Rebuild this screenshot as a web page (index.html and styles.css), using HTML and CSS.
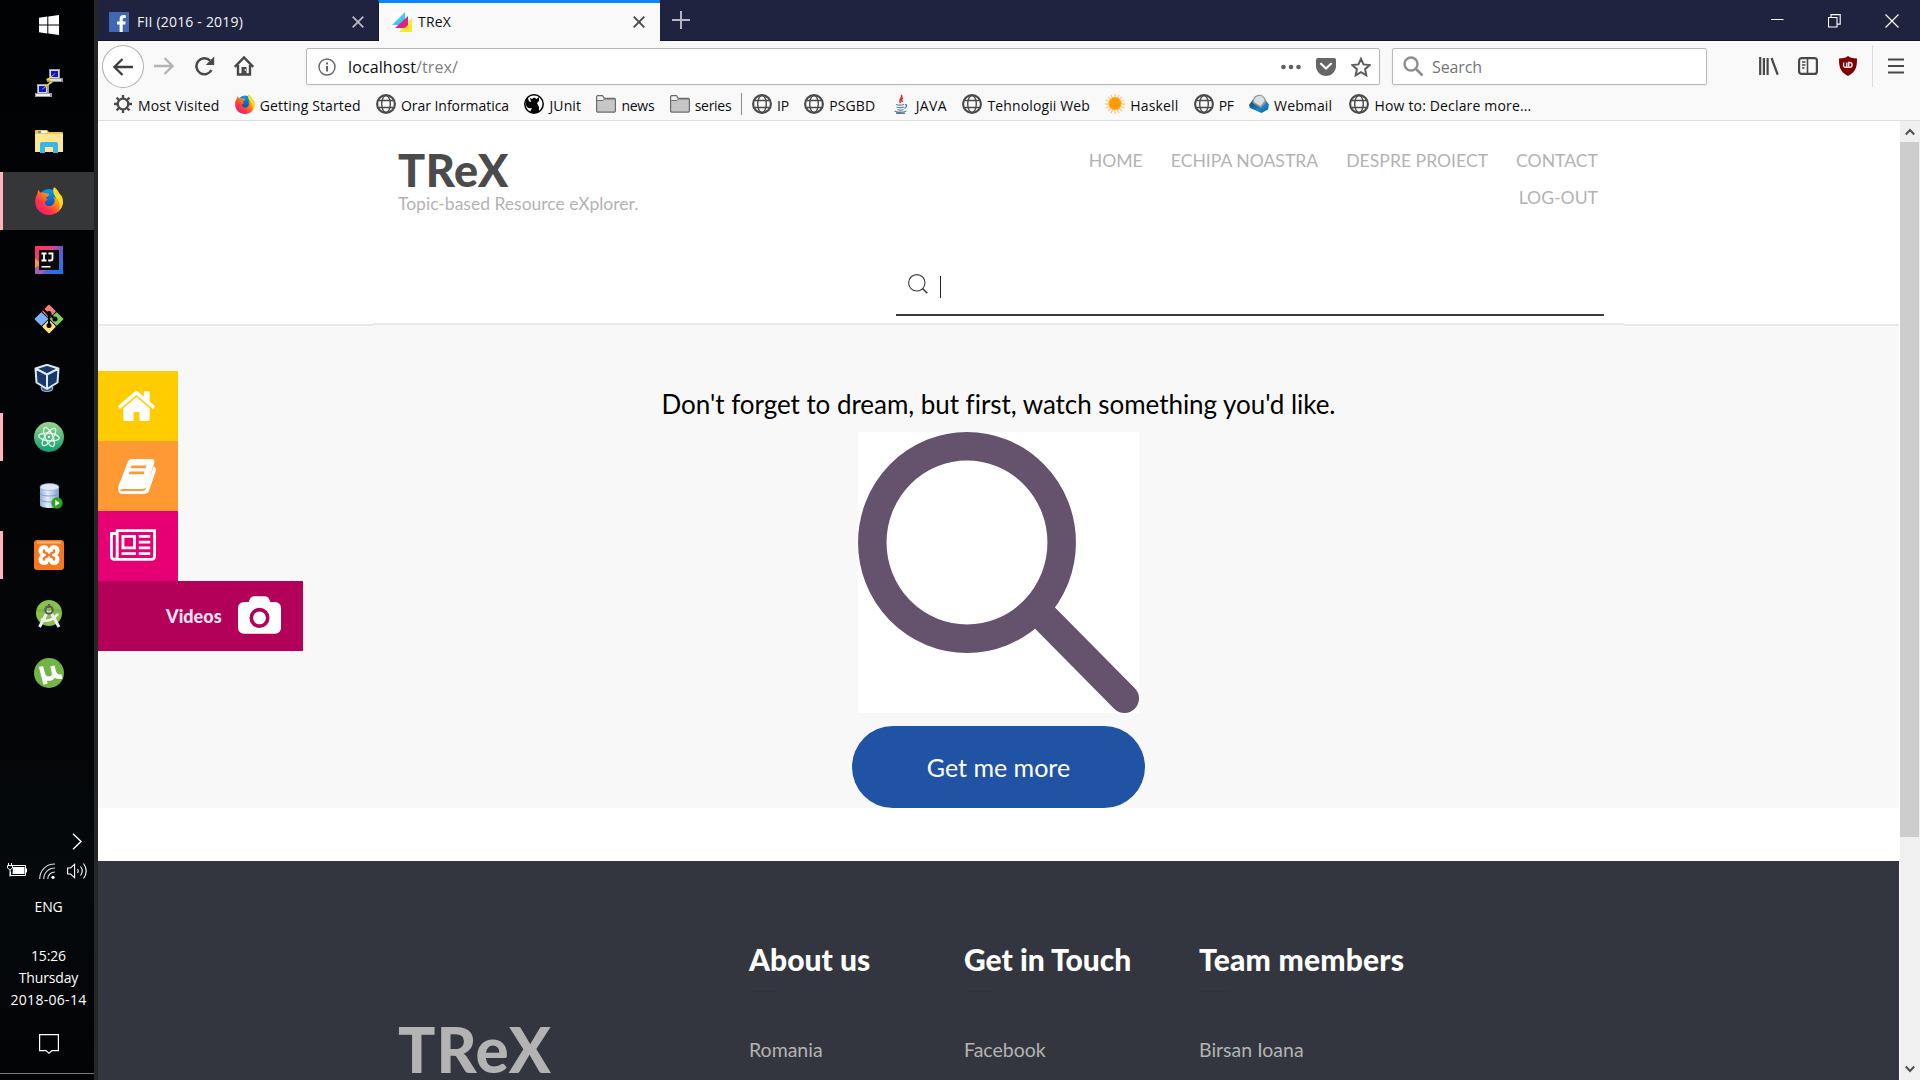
FILE: index.html
```html
<!DOCTYPE html>
<html lang="en">
<head>
<meta charset="utf-8">
<title>TReX</title>
<link rel="stylesheet" href="styles.css">
</head>
<body>
<svg class="defs" aria-hidden="true">
  <defs>
    <linearGradient id="fx-body" x1="1" y1="0" x2="0.1" y2="1"><stop offset="0" stop-color="#ffe226"/><stop offset="0.4" stop-color="#ff9a0a"/><stop offset="0.7" stop-color="#ff3647"/><stop offset="1" stop-color="#e31587"/></linearGradient>
    <linearGradient id="fx-globe" x1="0" y1="0" x2="0" y2="1"><stop offset="0" stop-color="#00a2f0"/><stop offset="1" stop-color="#133c9b"/></linearGradient>
    <linearGradient id="atom-bg" x1="0" y1="0" x2="0" y2="1"><stop offset="0" stop-color="#9bd58b"/><stop offset="1" stop-color="#0d9f70"/></linearGradient>
    <linearGradient id="ij-bg" x1="0" y1="0" x2="1" y2="1"><stop offset="0" stop-color="#ff2e63"/><stop offset="0.35" stop-color="#e8407a"/><stop offset="0.5" stop-color="#6a5ac8"/><stop offset="1" stop-color="#087cfa"/></linearGradient>
    <linearGradient id="db-bg" x1="0" x2="1"><stop offset="0" stop-color="#8fb2de"/><stop offset="0.4" stop-color="#e2ecf9"/><stop offset="1" stop-color="#7f9cc8"/></linearGradient>
    <linearGradient id="mail-bg" x1="0" y1="0" x2="1" y2="1"><stop offset="0" stop-color="#14405f"/><stop offset="0.6" stop-color="#1c83c6"/><stop offset="1" stop-color="#0e5f9e"/></linearGradient>
    <symbol id="firefox" viewBox="0 0 28 28">
      <circle cx="14" cy="12.5" r="10.5" fill="url(#fx-globe)"/>
      <path d="M19 .2c3 2 4.500 4.500 5.200 6.300 2.200 1.700 4 5 3.700 9C27.300 22.500 21.500 28 14 28S.3 22.500.2 15c0-4 .8-6 2.200-8.200C2.400 5 3 3.600 4 3c.3 1.400 1 2.300 1.600 2.800 2-.6 4 0 5 .3 1 .5 2 .9 3.600.6-.1 1.500-1 2.600-3 3.300-.5 1.500.5 2.200 1.800 2.800-2 .6-3 1.500-3.300 3 .8 2.700 3.300 3.700 5.500 3.200 3.300-.8 5-3.500 4.200-6.700-.3-1-.8-1.700-1.400-2.300 1.500.3 2.300 1 3 2C20.800 8.500 17 5 19 .2z" fill="url(#fx-body)"/>
      <path d="M19 .2c3 2 4.500 4.500 5.200 6.300 2.200 1.700 4 5 3.700 9-.2 3-1.500 6-3.500 8 1-5 .6-8.500-3-12.500C18.500 7.500 17.500 4 19 .2z" fill="#ffe22e" opacity="0.85"/>
    </symbol>
    <symbol id="globe" viewBox="0 0 20 20">
      <g fill="none" stroke="#4a4a4a"><circle cx="10" cy="10" r="8.900" stroke-width="2.100"/><ellipse cx="10" cy="10" rx="4.300" ry="8.500" stroke-width="1.400"/><path d="M2.500 6.500h15M2.500 13.500h15" stroke-width="1.400"/></g>
    </symbol>
    <symbol id="folder" viewBox="0 0 20 18">
      <path d="M.6 16.200V1.600L1.500.7h5l1.800 2.600h10.200l.9.900v12l-.9.900h-17z" fill="#c6c6c6" stroke="#6b6b6b" stroke-width="1.200"/><path d="M1.300 5.500h5.500L8.500 4h10.300" fill="none" stroke="#6b6b6b"/><path d="M1.500 1.500h4.700L7.800 4 6.400 5H1.500z" fill="#f1f1f1"/>
    </symbol>
  </defs>
</svg>

<div class="screen">
  <aside class="taskbar">
    <div class="apps">
      <div class="app start"><svg width="20" height="20" viewBox="0 0 20 20"><path d="M0 2.800 8.300 1.500v8H0zM9.300 1.400 20 0v9.500H9.300zM0 10.500h8.300v8L0 17.200zM9.300 10.500H20V20L9.300 18.600z" fill="#fff"/></svg></div>
      <div class="app"><svg width="28" height="28" viewBox="0 0 28 28"><path d="M14 0h11v9h3v4H12v-4h2z" fill="#9a9a9a"/><path d="M15 1h9v8h-9z" fill="#d8d8d8"/><path d="M16 2h7v6h-7z" fill="#1010e0"/><path d="M13 10h13v2H13z" fill="#ddd"/><path d="M2 15h12v9h3v4H0v-4h2z" fill="#9a9a9a"/><path d="M3 16h9v8H3z" fill="#d8d8d8"/><path d="M4 17h7v6H4z" fill="#1010e0"/><path d="M1 25h14v2H1z" fill="#eee"/><path d="M20 4.500 11 11l5 1-9 8.500L18 13l-5-1.500z" fill="#ffff10" stroke="#a8a000" stroke-width="0.500"/></svg></div>
      <div class="app"><svg width="28" height="24" viewBox="0 0 28 24"><path d="M0 1q0-1 1-1h11l2 2h13q1 0 1 1v19H0z" fill="#f6c445"/><path d="M0 4h28v18H0z" fill="#ffe695"/><path d="M3 1h9v2H3z" fill="#fff"/><path d="M3 1h3v2H3z" fill="#25a8dc"/><path d="M5 23v-9q0-2 2-2h14q2 0 2 2v9h-5v-6H10v6z" fill="#3cb4e7"/></svg></div>
      <div class="app active"><svg width="28" height="28"><use href="#firefox"/></svg></div>
      <div class="app"><svg width="28" height="28" viewBox="0 0 28 28"><path d="M0 0h28v28H0z" fill="url(#ij-bg)"/><path d="M0 12l6 6-6 5z" fill="#fc9a22"/><path d="M0 28v-6l6-4 4 7-3 3z" fill="#a05fb0"/><path d="M4 4h20v20H4z" fill="#0a0a0a"/><path d="M6.500 7.500h5M6.500 14.500h5M9 7.500v7M13.500 7.500h4v5q0 2-2 2h-2.300" fill="none" stroke="#fff" stroke-width="1.800"/><path d="M6.500 20h9v1.500h-9z" fill="#fff"/></svg></div>
      <div class="app"><svg width="30" height="30" viewBox="0 0 30 30"><g transform="rotate(45 15 15)"><rect x="4.600" y="4.600" width="10" height="10" rx="1" fill="#f87c7c"/><rect x="15.400" y="4.600" width="10" height="10" rx="1" fill="#84cc5e"/><rect x="4.600" y="15.400" width="10" height="10" rx="1" fill="#7db0ff"/><rect x="15.400" y="15.400" width="10" height="10" rx="1" fill="#ffe07a"/></g><path d="M9.500 5.500 15 11v10M15 10l6 5" stroke="#000" stroke-width="2" fill="none"/><circle cx="15" cy="9.500" r="2.500"/><circle cx="21" cy="15" r="2.500"/><circle cx="15" cy="21.500" r="2.500"/></svg></div>
      <div class="app vbox"><svg width="26" height="28" viewBox="0 0 26 28"><path d="M7 23h12l-1 3.500q-5 2.500-10 0z" fill="#3a568c" stroke="#9eb4d8"/><path d="M13 .8 24.500 4.500 23.500 18.500 13 25 2.500 18.500 1.500 4.500z" fill="#183a68"/><path d="M13 .8 24.500 4.500 13 10.500 1.500 4.500zM13 10.500V25L2.500 18.500l-1-14M24.500 4.500l-1 14L13 25" fill="none" stroke="#dfe8f5" stroke-width="2" stroke-linejoin="round"/></svg></div>
      <div class="app open"><svg width="30" height="30" viewBox="0 0 30 30"><circle cx="15" cy="15" r="15" fill="url(#atom-bg)"/><g fill="none" stroke="#e8fff0" stroke-width="1.200"><ellipse cx="15" cy="15" rx="10.300" ry="3.800" transform="rotate(6 15 15)"/><ellipse cx="15" cy="15" rx="10.300" ry="3.800" transform="rotate(66 15 15)"/><ellipse cx="15" cy="15" rx="10.300" ry="3.800" transform="rotate(126 15 15)"/></g><circle cx="15" cy="15" r="1.200" fill="#fff"/></svg></div>
      <div class="app database"><svg width="24" height="26" viewBox="0 0 24 26"><path d="M1 4v18c0 4 19 4 19 0V4z" fill="url(#db-bg)"/><ellipse cx="10.500" cy="4" rx="9.500" ry="3.500" fill="#dce8f7" stroke="#8fa9cf" stroke-width="0.600"/><path d="M1 10c0 4 19 4 19 0M1 16c0 4 19 4 19 0" fill="none" stroke="#7e99c6" stroke-width="0.900"/><circle cx="18" cy="20" r="5.700" fill="#2ba51d"/><path d="M16.300 17v6l4.500-3z" fill="#fff"/></svg></div>
      <div class="app open"><svg width="30" height="30" viewBox="0 0 30 30"><rect width="30" height="30" rx="3" fill="#f5781f"/><path d="M3 1.500h24v2H3z" fill="#ffb77f"/><g fill="#fff"><circle cx="10" cy="10.500" r="5.500"/><circle cx="20" cy="10.500" r="5.500"/><circle cx="10" cy="19.500" r="5.500"/><circle cx="20" cy="19.500" r="5.500"/><path d="M7 10h16v10H7z"/></g><path d="M10 9.500v2.500l3 1.500v3L10 18v2.500M20 9.500v2.500l-3 1.500v3l3 1.500v2.500M12 15h6" fill="none" stroke="#f5781f" stroke-width="2.300"/><path d="M13.500 4h3L15 9zM13.500 26h3L15 21z" fill="#f5781f"/></svg></div>
      <div class="app"><svg width="26" height="30" viewBox="0 0 26 30"><circle cx="13" cy="14" r="13" fill="#8ac249"/><path d="M1 10h24v3H1z" fill="#74a83d" opacity="0.500"/><path d="M5 20q8 5 17-5" fill="none" stroke="#fff" stroke-width="2.500"/><path d="M12 12 3.500 28M14 12l9 16" stroke="#eceff1" stroke-width="3"/><circle cx="13" cy="11" r="3.700" fill="none" stroke="#55625a" stroke-width="2.200"/><path d="M12 5h2v4h-2z" fill="#55625a"/></svg></div>
      <div class="app"><svg width="30" height="30" viewBox="0 0 30 30"><circle cx="15" cy="15" r="15" fill="#72b446"/><path d="M7 8.500 11.500 26M8.800 16q1.800 5.500 7 4.500t4-6.500L18.500 8M20 14q1.800 6 8 4.500" fill="none" stroke="#fff" stroke-width="4.400"/></svg></div>
    </div>
    <div class="tray">
      <svg class="chevron" width="10" height="17" viewBox="0 0 10 17"><path d="M1 .7 9 8.500 1 16.300" fill="none" stroke="#fff" stroke-width="1.400"/></svg>
      <div class="status">
        <svg width="20" height="16" viewBox="0 0 20 16"><path d="M5 2.500h13.500v10H3.500v-4" fill="none" stroke="#fff"/><path d="M6 4h11.500v7H5.500zM19 5.500h1v4h-1z" fill="#fff"/><path d="M1.500 0v2.500M4.500 0v2.500M.5 2.500h5V5l-2 1.500h-1L.5 5zM3 6.500v7" fill="none" stroke="#fff"/></svg>
        <svg width="17" height="17" viewBox="0 0 17 17"><g fill="none" stroke="#ddd" stroke-width="1.100"><path d="M.7 16C.7 7.500 7 1 16 1"/><path d="M4.800 16C4.800 9.500 9.500 5 16 5"/><path d="M8.800 16c0-4 3-7 7.200-7"/></g><circle cx="14" cy="14.300" r="1.600" fill="#fff"/></svg>
        <svg width="21" height="18" viewBox="0 0 21 18"><g fill="none" stroke="#fff" stroke-width="1.100"><path d="M.6 6v6h3l4 3.800V2.200L3.600 6z"/><path d="M10.500 7q1.500 2 0 4M13.500 4.500q3.500 4.500 0 9M16.500 1.500q5.500 7.500 0 15"/></g></svg>
      </div>
      <div class="lang">ENG</div>
      <div class="clock"><span>15:26</span><span>Thursday</span><span class="date">2018-06-14</span></div>
      <svg class="bubble" width="20" height="20" viewBox="0 0 20 20"><path d="M.6.600h18.800v16h-6.400L10 19.200 7 16.600H.6z" fill="none" stroke="#fff" stroke-width="1.200"/></svg>
    </div>
  </aside>

  <div class="browser">
    <div class="tabs">
      <div class="tab">
        <svg width="20" height="20" viewBox="0 0 20 20"><rect width="20" height="20" rx="0.800" fill="#4267b2"/><path d="M13.700 20v-7.600h2.600l.4-3h-3v-2c0-.9.300-1.500 1.500-1.500h1.600V3.200c-.3 0-1.200-.1-2.300-.1-2.400 0-3.900 1.400-3.900 4v2.300H8v3h2.600V20z" fill="#fff"/></svg>
        <span class="label">FII (2016 - 2019)</span>
        <svg class="close" width="12" height="12" viewBox="0 0 12 12"><path d="m.7.700 10.600 10.600M11.300.7.700 11.300" stroke="#b9bac4" stroke-width="1.800"/></svg>
      </div>
      <div class="tab current">
        <svg width="20" height="20" viewBox="0 0 20 20"><path d="M0 0h20v20H0z" fill="#fff"/><path d="M0 13 13 0v8l-5 5z" fill="#40c8f4"/><path d="M7 20 20 6v14z" fill="#ffe52e"/><path d="M3 16 16 4v9l-3 3z" fill="#e0257f"/></svg>
        <span class="label">TReX</span>
        <svg class="close" width="12" height="12" viewBox="0 0 12 12"><path d="m.7.700 10.600 10.600M11.300.7.700 11.300" stroke="#4a4a4f" stroke-width="1.900"/></svg>
      </div>
      <svg class="plus" width="18" height="18" viewBox="0 0 18 18"><path d="M9 0v18M0 9h18" stroke="#b5b6c2" stroke-width="2"/></svg>
      <div class="window-buttons">
        <svg width="13" height="14" viewBox="0 0 13 14"><path d="M0 5.500h12.500" stroke="#fff"/></svg>
        <svg width="13" height="14" viewBox="0 0 13 14"><path d="M.5 3.500h8.500v9.500H.5zM3 3.500V.6h9.200v9.500H9" fill="none" stroke="#fff" stroke-width="1.100"/></svg>
        <svg width="14" height="14" viewBox="0 0 14 14"><path d="m.5.500 13 13M13.500.5l-13 13" stroke="#fff" stroke-width="1.200"/></svg>
      </div>
    </div>

    <div class="toolbar">
      <div class="back"><svg width="20" height="18" viewBox="0 0 20 18"><path d="M20 9H2M9.500 1 1.500 9l8 8" fill="none" stroke="#3f3f3f" stroke-width="2.300"/></svg></div>
      <svg class="forward" width="20" height="18" viewBox="0 0 20 18"><path d="M0 9h18M10.500 1l8 8-8 8" fill="none" stroke="#b4b4b4" stroke-width="2.300"/></svg>
      <svg class="reload" width="20" height="20" viewBox="0 0 20 20"><path d="M16.500 14A8 8 0 1 1 15 4.500" fill="none" stroke="#484848" stroke-width="2.500"/><path d="M19.200.500v8.500h-8.500z" fill="#484848"/></svg>
      <svg class="house" width="20" height="20" viewBox="0 0 20 20"><path d="M.8 11 10 1.500 19.200 11" fill="none" stroke="#484848" stroke-width="2.500"/><path d="M4 9v9.500h12V9" fill="none" stroke="#484848" stroke-width="2.400"/><path d="M7.500 19v-8h5v8z" fill="#484848"/><path d="M10.700 13h1v2h-1z" fill="#fff"/></svg>
      <div class="field url">
        <svg width="18" height="18" viewBox="0 0 18 18"><circle cx="9" cy="9" r="8" fill="none" stroke="#666" stroke-width="1.400"/><path d="M8 8h2v5.500H8zM8 4.500h2v2H8z" fill="#666"/></svg>
        <span class="address">localhost<span class="path">/trex/</span></span>
        <div class="page-actions">
          <svg width="20" height="20" viewBox="0 0 20 20"><g fill="#5f5f5f"><circle cx="2.500" cy="10" r="2.300"/><circle cx="10" cy="10" r="2.300"/><circle cx="17.500" cy="10" r="2.300"/></g></svg>
          <svg width="20" height="20" viewBox="0 0 20 20"><path d="M2 1h16q2 0 2 2v6c0 6-5 10-10 10S0 15 0 9V3q0-2 2-2z" fill="#666"/><path d="m5 6.800 5 4.800 5-4.800" fill="none" stroke="#fff" stroke-width="2.200" stroke-linecap="round"/></svg>
          <svg width="20" height="20" viewBox="0 0 20 20"><path d="m10 1.800 2.500 5.600 6.100.7-4.500 4.100 1.200 6.100L10 15.200l-5.300 3.100 1.200-6.100L1.400 8.100l6.100-.7z" fill="none" stroke="#5c5c5c" stroke-width="2"/></svg>
        </div>
      </div>
      <div class="field find">
        <svg width="21" height="21" viewBox="0 0 21 21"><circle cx="8" cy="8" r="6.500" fill="none" stroke="#8f8f8f" stroke-width="2.400"/><path d="m12.500 12.500 7 7" stroke="#8f8f8f" stroke-width="2.700"/></svg>
        <span>Search</span>
      </div>
      <svg class="library" width="20" height="18" viewBox="0 0 20 18"><path d="M1.200 0v18M4.900 1v17M8.600 1v17M12.500 1 18.700 17.700" stroke="#484848" stroke-width="2.200"/></svg>
      <svg class="sidebar-toggle" width="20" height="18" viewBox="0 0 20 18"><rect x="1.100" y="1.100" width="17.800" height="15.800" rx="2.500" fill="none" stroke="#484848" stroke-width="2.200"/><path d="M9.500 1v16" stroke="#484848" stroke-width="1.600"/><path d="M4 5h3.500M4 8h3.500M4 11h2.500" stroke="#484848" stroke-width="1.300"/></svg>
      <svg class="shield" width="18" height="20" viewBox="0 0 18 20"><path d="M9 0c2.500 1.800 5.500 2.400 9 2.500 0 8-.5 13-9 17.500C.5 15.500 0 10.500 0 2.500 3.500 2.400 6.500 1.800 9 0z" fill="#800000"/><path d="M4.600 6.500v3.300q0 1.500 1.500 1.500t1.700-1.500V6.500v4.800h2.700q2.600 0 2.600-2.400t-2.600-2.400H9.800v4.800" fill="none" stroke="#fff" stroke-width="1.300"/></svg>
      <div class="divider"></div>
      <svg class="burger" width="16" height="16" viewBox="0 0 16 16"><path d="M0 1.500h16M0 8h16M0 14.500h16" stroke="#484848" stroke-width="2.200"/></svg>
    </div>

    <div class="bookmarks">
      <div class="bookmark"><svg width="20" height="20" viewBox="0 0 20 20"><circle cx="10" cy="10" r="5.300" fill="none" stroke="#4a4a4a" stroke-width="2.300"/><path d="M10 1v3.500M10 15.500V19M1 10h3.500M15.500 10H19M3.600 3.600l2.600 2.600M13.800 13.800l2.600 2.600M16.400 3.600l-2.600 2.600M6.200 13.800l-2.600 2.600" stroke="#4a4a4a" stroke-width="2.300"/></svg><span>Most Visited</span></div>
      <div class="bookmark"><svg width="20" height="20"><use href="#firefox"/></svg><span>Getting Started</span></div>
      <div class="bookmark snug"><svg width="20" height="20"><use href="#globe"/></svg><span>Orar Informatica</span></div>
      <div class="bookmark"><svg width="20" height="20" viewBox="0 0 20 20"><circle cx="10" cy="10" r="9.200" fill="#fff" stroke="#000" stroke-width="1.500"/><path d="M3 13C1 10 1 6 4 3c0 3 1 5 3 5L6 4l2 1 2-1.500L12.500 5 15 3v4l-2 2 2 4v5q-5 2-9 0l2-4q-3 1-5-1z"/></svg><span>JUnit</span></div>
      <div class="bookmark tight"><svg width="20" height="18"><use href="#folder"/></svg><span>news</span></div>
      <div class="bookmark tight"><svg width="20" height="18"><use href="#folder"/></svg><span>series</span></div>
      <div class="bookmark-rule"></div>
      <div class="bookmark tight"><svg width="20" height="20"><use href="#globe"/></svg><span>IP</span></div>
      <div class="bookmark"><svg width="20" height="20"><use href="#globe"/></svg><span>PSGBD</span></div>
      <div class="bookmark wide"><svg width="20" height="20" viewBox="0 0 20 20"><path d="M10 1c3 2-3 4-.5 8M12 4c-2 1-1.500 2.500-.5 4" fill="none" stroke="#cf2b33" stroke-width="1.500"/><path d="M5 10.500q4 1.300 8 0M5.500 13q4 1.300 7.500 0M6.500 15.500q3 1.200 6 0M14 10.500q3.500.5-.5 4M3.500 17q6 2.500 12 0M5 19q5 1 9 .2" fill="none" stroke="#5d7b9f" stroke-width="1.300"/></svg><span>JAVA</span></div>
      <div class="bookmark"><svg width="20" height="20"><use href="#globe"/></svg><span>Tehnologii Web</span></div>
      <div class="bookmark"><svg width="20" height="20" viewBox="0 0 20 20"><path d="M10 0v20M0 10h20M3 3l14 14M17 3 3 17M6 .7l8 18.600M14 .7 6 19.300M.7 6l18.600 8M19.300 6 .7 14" stroke="#ffc680" stroke-width="1.300"/><circle cx="10" cy="9.500" r="6" fill="#ff9900" stroke="#ffa726"/></svg><span>Haskell</span></div>
      <div class="bookmark tight"><svg width="20" height="20"><use href="#globe"/></svg><span>PF</span></div>
      <div class="bookmark"><svg width="20" height="20" viewBox="0 0 20 20"><path d="M0 11 4 5.500h12l4 5-1 5L12.500 19 1 14z" fill="url(#mail-bg)"/><path d="M3.500 9C3.500 3 7 .8 10.500.8S17 4 17 8.500L12 14z" fill="#8f979e"/><path d="M5 8c0-4 2.500-6 5.500-6s5 2 5 5L11.500 12z" fill="#dcdfe1"/></svg><span>Webmail</span></div>
      <div class="bookmark last"><svg width="20" height="20"><use href="#globe"/></svg><span>How to: Declare more...</span></div>
    </div>

    <div class="viewport">
      <div class="page">
        <header class="site-header">
          <div class="header-inner">
            <div class="header-top">
              <div class="brand"><h1>TReX</h1><p>Topic-based Resource eXplorer.</p></div>
              <nav class="menu"><a>HOME</a><a>ECHIPA NOASTRA</a><a>DESPRE PROIECT</a><a>CONTACT</a><a>LOG-OUT</a></nav>
            </div>
            <div class="search">
              <svg width="20" height="20" viewBox="0 0 20 20"><circle cx="8.800" cy="8.800" r="8.200" fill="none" stroke="#373a42" stroke-width="1.100"/><path d="m14.500 14.500 4.800 4.800" stroke="#373a42" stroke-width="1.500"/></svg>
              <i class="caret"></i>
            </div>
          </div>
        </header>
        <main class="hero">
          <p class="lead">Don't forget to dream, but first, watch something you'd like.</p>
          <svg class="lens" width="281" height="281" viewBox="0 0 281 281"><path d="M0 0h281v281H0z" fill="#fff"/><ellipse cx="109" cy="110.500" rx="94.700" ry="96.200" fill="none" stroke="#65526c" stroke-width="28.500"/><path d="M182 181 266.500 266.500" stroke="#65526c" stroke-width="29" stroke-linecap="round"/></svg>
          <a class="button">Get me more</a>
        </main>
        <footer class="site-footer">
          <div class="footer-logo">TReX</div>
          <div class="column"><h2>About us</h2><p>Romania</p></div>
          <div class="column"><h2>Get in Touch</h2><p>Facebook</p></div>
          <div class="column team"><h2>Team members</h2><p>Birsan Ioana</p></div>
        </footer>
        <div class="side-menu">
          <a class="side home"><svg width="37" height="30" viewBox="89 250 1614 1286" preserveAspectRatio="none"><path d="M1472 992v480q0 26-19 45t-45 19h-384v-384h-256v384h-384q-26 0-45-19t-19-45v-480q0-1 .5-3t.5-3l575-474 575 474q1 2 1 6zm223-69l-62 74q-8 9-21 11h-3q-13 0-21-7l-692-577-692 577q-12 8-24 7-13-2-21-11l-62-74q-8-10-7-23.500t11-21.500l719-599q32-26 76-26t76 26l244 204v-195q0-14 9-23t23-9h192q14 0 23 9t9 23v408l219 182q10 8 11 21.500t-7 23.500z"/></svg></a>
          <a class="side book"><svg width="39" height="35" viewBox="0 0 39 35"><path d="M13 0h18.500q4 0 3 4l-6.500 22q-1.200 4-5 4H4.500q-3 0-2 2h20.500q3 0 4-3.500L34 7.500q3 1 2 4.500l-6.500 20q-1 3-5 3H5Q0 35 0 30q0-4 2-7L8.500 5Q10 0 13 0z" transform="scale(1.050 1)"/><path d="M13.500 6.500h15l-.8 2.700h-15zM11.500 12.500h15l-.8 2.700h-15z" class="cut"/></svg></a>
          <a class="side news"><svg width="46" height="32" viewBox="0 128 2048 1408"><path d="M1024 512h-384v384h384v-384zm128 640v128h-640v-128h640zm0-768v640h-640v-640h640zm640 768v128h-512v-128h512zm0-256v128h-512v-128h512zm0-256v128h-512v-128h512zm0-256v128h-512v-128h512zm-1536 960v-960h-128v960q0 26 19 45t45 19 45-19 19-45zm1664 0v-1088h-1536v1088q0 33-11 64h1483q26 0 45-19t19-45zm128-1216v1216q0 80-56 136t-136 56h-1664q-80 0-136-56t-56-136v-1088h256v-128h1792z"/></svg></a>
          <a class="side videos"><span>Videos</span><svg width="43" height="38" viewBox="0 0 1920 1664"><path d="M960 672q119 0 203.500 84.500t84.500 203.500-84.500 203.500-203.500 84.500-203.500-84.500-84.500-203.500 84.500-203.500 203.500-84.500zm704-416q106 0 181 75t75 181v896q0 106-75 181t-181 75h-1408q-106 0-181-75t-75-181v-896q0-106 75-181t181-75h224l51-136q19-49 69.500-84.500t103.500-35.500h512q53 0 103.500 35.500t69.500 84.500l51 136h224zm-704 1152q185 0 316.500-131.500t131.500-316.500-131.500-316.500-316.500-131.500-316.500 131.500-131.500 316.500 131.500 316.500 316.500 131.500z"/></svg></a>
        </div>
      </div>
      <div class="scrollbar">
        <svg width="10" height="8" viewBox="0 0 10 8"><path d="M.8 6.500 5 2l4.200 4.500" fill="none" stroke="#505050" stroke-width="2"/></svg>
        <div class="thumb"></div>
        <svg class="down" width="10" height="8" viewBox="0 0 10 8"><path d="M.8 1.500 5 6l4.200-4.500" fill="none" stroke="#505050" stroke-width="2"/></svg>
      </div>
    </div>
  </div>
</div>
</body>
</html>
```
FILE: styles.css
```css
* { box-sizing: border-box; }
body { margin: 0; overflow: hidden; font: 14px/20px "Open Sans", sans-serif; }
h1, h2, p { margin: 0; }
svg { display: block; flex: none; }
.defs { position: absolute; width: 0; height: 0; }
.screen { display: flex; width: 1920px; height: 1080px; }

/* taskbar */
.taskbar { display: flex; flex-direction: column; justify-content: space-between; width: 98px; height: 1080px; overflow: hidden; border-right: 4px solid #262626; background: linear-gradient(#010203, #030507 70%, #05090c 80%, #020305); color: #fff; }
.apps { display: flex; flex-direction: column; gap: 1px; margin-top: -5px; }
.app { position: relative; display: flex; align-items: center; justify-content: center; height: 58px; padding-left: 4px; }
.app.start { padding-top: 2px; }
.app.vbox { padding-left: 0; }
.app.database { padding-left: 7px; }
.app.active { width: 98px; padding-left: 0; background: linear-gradient(90deg, #353637 94px, #4f4f4f 94px); }
.app.active::before, .app.open::before { content: ""; position: absolute; left: 0; top: 0; width: 3px; height: 58px; background: #ffb3ba; }
.app.open::before { top: 5px; height: 48px; }
.tray { display: flex; flex-direction: column; align-items: center; width: 98px; height: 247px; }
.chevron { margin-left: 56px; }
.status { display: flex; align-items: center; justify-content: space-between; width: 81px; height: 18px; margin: 12px 0 0 -4px; }
.status svg:nth-child(2) { margin-left: 2px; }
.lang { margin: 17px 1px 0 0; letter-spacing: -0.2px; }
.clock { display: flex; flex-direction: column; align-items: center; margin: 28px 1px 0 0; line-height: 22px; letter-spacing: -0.15px; }
.date { letter-spacing: 0.3px; }
.bubble { margin-top: 23px; }
.tray::after { content: ""; width: 98px; height: 1px; margin-top: 19px; background: #777; }

/* browser frame */
.browser { display: flex; flex-direction: column; width: 1822px; }
.tabs { display: flex; height: 41px; background: #202340; border-bottom: 1px solid #14162d; }
.tab { display: flex; align-items: center; width: 280px; height: 41px; padding: 2px 14px 0 11px; color: #f4f4f6; letter-spacing: 0.19px; }
.tab .label { flex: 1; margin-left: 8px; }
.tab.current { width: 282px; padding: 0 15px 1px 13px; border-top: 3px solid #0a84ff; border-left: 1px solid #14162d; background: #f9f9fa; color: #0c0c0d; }
.tab.current .label { margin-left: 6px; }
.plus { margin: 11px 0 0 12px; }
.window-buttons { display: flex; gap: 44px; margin: 14px 21px 0 auto; }
.toolbar { display: flex; align-items: center; height: 50px; padding-left: 4px; background: #f9f9fa; }
.back { display: flex; align-items: center; justify-content: center; width: 42px; height: 43px; margin-top: 1px; border: 1px solid #b1b1b3; border-radius: 50%; background: #fff; }
.forward { margin-left: 10px; }
.reload { margin-left: 21px; }
.house { margin-left: 19px; }
.field { display: flex; align-items: center; height: 37px; margin-top: 1px; border: 1px solid #b9b9bb; border-radius: 2px; background: #fff; box-shadow: 0 1px 3px rgba(0, 0, 0, 0.06); font-size: 16px; }
.url { width: 1074px; margin-left: 52px; padding: 0 8px 0 11px; }
.address { flex: 1; margin-left: 12px; color: #0c0c0d; letter-spacing: 0.11px; }
.path { color: #808080; }
.page-actions { display: flex; gap: 15px; }
.find { width: 315px; margin-left: 12px; padding-left: 10px; color: #757575; }
.find span { margin-left: 8px; letter-spacing: -0.11px; }
.library { margin-left: 52px; }
.sidebar-toggle { margin-left: 19px; }
.shield { margin-left: 21px; }
.divider { width: 1px; height: 42px; margin-left: 15px; background: #dcdcdc; }
.burger { margin-left: 15px; }
.bookmarks { display: flex; align-items: flex-start; gap: 15.350px; height: 30px; padding: 3px 0 0 15px; border-bottom: 1px solid #dedede; background: #f9f9fa; color: #0c0c0d; }
.bookmark { display: flex; align-items: center; height: 20px; letter-spacing: 0.13px; }
.bookmark span { margin: 3px 0 0 5px; white-space: nowrap; }
.bookmark.snug { letter-spacing: -0.05px; }
.bookmark.tight { letter-spacing: -0.28px; }
.bookmark.wide { letter-spacing: 0.4px; }
.bookmark.last { margin-left: 1px; letter-spacing: 0.16px; }
.bookmark.last span { margin-left: 6px; }
.bookmark-rule { width: 1px; height: 22px; margin: -1px -5px 0 -6px; background: #8a8a8a; }

/* page */
.viewport { display: flex; height: 959px; }
.page { position: relative; width: 1801px; overflow: hidden; background: #fff; font-family: Lato, sans-serif; }
.site-header { height: 205px; border-bottom: 2px solid #e9e9e9; }
.header-inner { width: 1251px; height: 204px; margin: 0 auto; padding: 21px 20px 0 26px; border-bottom: 2px solid #e9e9e9; background: #fff; box-shadow: 0 1px 0 #f8f8f8; }
.header-top { display: flex; justify-content: space-between; height: 116px; padding-right: 5px; }
.brand { padding-top: 5.500px; margin-left: -1px; }
.brand h1 { font-size: 45px; line-height: 45px; font-weight: 900; letter-spacing: 0.5px; color: #4b4b4b; }
.brand p { font-size: 17.500px; line-height: 22px; color: #b3b3b3; }
.menu { display: flex; flex-wrap: wrap; justify-content: flex-end; align-content: flex-start; column-gap: 28px; width: 540px; margin-right: 1px; font-size: 17.600px; line-height: 37px; color: #b3b3b3; }
.search { display: flex; width: 708px; height: 58px; margin-left: auto; padding: 16px 0 0 12px; border-bottom: 2px solid #373a42; }
.caret { width: 1px; height: 22px; margin: 2px 0 0 12px; background: #222; }
.hero { display: flex; flex-direction: column; align-items: center; height: 482px; padding-top: 62px; background: #f8f8f8; }
.lead { font-size: 26px; line-height: 32px; letter-spacing: -0.04px; color: #000; }
.lens { margin-top: 12px; }
.button { width: 293px; height: 82px; margin-top: 13px; border-radius: 41px; background: #2153a5; color: #fff; font-size: 25px; line-height: 82px; text-align: center; }
.site-footer { display: grid; grid-template-columns: 350px 215px 235px 1fr; height: 219px; margin-top: 53px; padding-left: 301px; background: #33363e; color: #b3b3b3; }
.footer-logo { padding-top: 157px; margin-left: -1px; font-size: 62px; line-height: 62px; font-weight: 900; letter-spacing: 1px; }
.column { padding-top: 80px; font-size: 19.500px; line-height: 24px; }
.column h2 { font-size: 30px; line-height: 36px; font-weight: 900; color: #fff; }
.column.team h2 { letter-spacing: 0.2px; }
.column h2::after { content: ""; display: block; width: 31px; height: 1px; margin-top: 14px; background: #333; }
.column p { margin-top: 46px; }

/* shortcuts pinned over the left edge of the page */
.side-menu { position: absolute; left: 0; top: 250px; }
.side { display: flex; align-items: center; width: 80px; height: 70px; fill: #fff; }
.home { padding-left: 20px; background: #ffcc00; }
.book { padding-left: 20px; background: #ff9933; }
.book .cut { fill: #ff9933; }
.news { padding: 0 0 2px 12px; background: #e60073; }
.videos { width: 205px; padding-left: 68px; background: #b30059; color: #f3e3ec; font-size: 18px; font-weight: 900; }
.videos svg { margin: 0 0 2px 16px; }

.scrollbar { display: flex; flex-direction: column; align-items: center; width: 20px; margin-left: 1px; background: #f0f0f0; padding-top: 7px; }
.thumb { width: 19px; height: 695px; margin: 6px 1px 0 0; background: #cdcdcd; }
.down { margin: auto 0 7px; }
```
